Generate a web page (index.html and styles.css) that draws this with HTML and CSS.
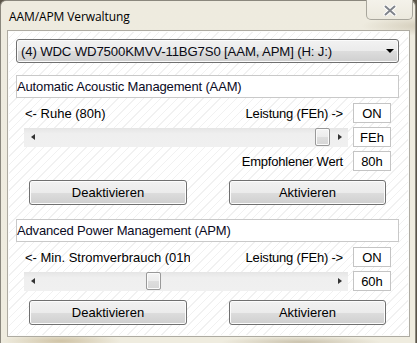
FILE: index.html
```html
<!DOCTYPE html>
<html>
<head>
<meta charset="utf-8">
<link rel="stylesheet" href="styles.css">
</head>
<body>
<div class="window">
  <div class="titlebar">
    <span class="title">AAM/APM Verwaltung</span>
    <div class="close">
      <svg width="14" height="11" viewBox="0 0 14 11"><path d="M2.5 1.5 L11.5 9.5 M11.5 1.5 L2.5 9.5" stroke="#fff" stroke-width="4" stroke-linecap="round"/><path d="M2.5 1.5 L11.5 9.5 M11.5 1.5 L2.5 9.5" stroke="#80848b" stroke-width="2" stroke-linecap="round"/></svg>
    </div>
  </div>
  <div class="client">
    <div class="combo">
      <span class="combo-text">(4) WDC WD7500KMVV-11BG7S0 [AAM, APM] (H: J:)</span>
      <span class="combo-arrow"></span>
    </div>

    <section class="group">
      <div class="header">Automatic Acoustic Management (AAM)</div>
      <div class="row">
        <span class="lbl-left">&lt;- Ruhe (80h)</span>
        <span class="lbl-right">Leistung (FEh) -&gt;</span>
        <span class="val">ON</span>
      </div>
      <div class="row">
        <div class="scroll">
          <span class="arr arr-l"></span>
          <div class="track"><span class="thumb" style="margin-left:274px"></span></div>
          <span class="arr arr-r"></span>
        </div>
        <span class="val">FEh</span>
      </div>
      <div class="row">
        <span class="lbl-right">Empfohlener Wert</span>
        <span class="val">80h</span>
      </div>
      <div class="buttons">
        <button class="btn">Deaktivieren</button>
        <button class="btn">Aktivieren</button>
      </div>
    </section>

    <section class="group group2">
      <div class="header">Advanced Power Management (APM)</div>
      <div class="row">
        <span class="lbl-left">&lt;- Min. Stromverbrauch (01h)</span>
        <span class="lbl-right">Leistung (FEh) -&gt;</span>
        <span class="val">ON</span>
      </div>
      <div class="row">
        <div class="scroll">
          <span class="arr arr-l"></span>
          <div class="track"><span class="thumb" style="margin-left:105px"></span></div>
          <span class="arr arr-r"></span>
        </div>
        <span class="val">60h</span>
      </div>
      <div class="buttons">
        <button class="btn">Deaktivieren</button>
        <button class="btn">Aktivieren</button>
      </div>
    </section>
  </div>
</div>
</body>
</html>
```
FILE: styles.css
```css
* { box-sizing: border-box; }
html, body {
  margin: 0;
  padding: 0;
  width: 417px;
  height: 343px;
  overflow: hidden;
  background: #5a5448;
  font-family: "Liberation Sans", Arial, sans-serif;
  color: #000;
}
.window {
  width: 416px;
  height: 343px;
  border: 1px solid #8a877d;
  border-bottom: none;
  border-radius: 6px 6px 0 0;
  background:
    radial-gradient(ellipse 60px 8px at 60px 340px, rgba(150,120,60,0.35), transparent),
    radial-gradient(ellipse 80px 6px at 300px 341px, rgba(120,100,60,0.3), transparent),
    radial-gradient(ellipse 70px 10px at 430px 25px, rgba(120,100,60,0.25), transparent),
    linear-gradient(180deg, #eeebdf 0%, #efecdf 100%);
  display: flex;
  flex-direction: column;
  padding: 0 5px 6px 6px;
}
.titlebar {
  height: 29px;
  display: flex;
  align-items: flex-start;
  justify-content: space-between;
  flex: none;
}
.title {
  font-family: "Open Sans", "Liberation Sans", sans-serif;
  font-size: 12px;
  margin: 7px 0 0 2px;
  letter-spacing: -0.1px;
}
.close {
  width: 47px;
  height: 20px;
  margin-top: -1px;
  margin-right: -3px;
  border: 1px solid #a8a69c;
  border-top: none;
  border-radius: 0 0 5px 5px;
  background: linear-gradient(180deg, #f4f2ea, #ece9de);
  display: flex;
  align-items: center;
  justify-content: center;
  padding-top: 1px;
}
.client {
  flex: 1;
  border: 1px solid #aeaba2;
  background-color: #fff;
  background-image: repeating-linear-gradient(135deg, #ffffff 0 5px, #f1f1f1 5px 6px);
  padding: 8px 10px 0 8px;
  box-shadow: inset 0 0 0 1px #fdfdfb;
}
.combo {
  height: 24px;
  border: 1px solid #707070;
  border-radius: 3px;
  background: linear-gradient(180deg, #f2f2f2 0%, #ebebeb 50%, #dddddd 50%, #cfcfcf 100%);
  display: flex;
  align-items: center;
  padding: 0 0 0 4px;
  box-shadow: inset 0 0 0 1px #fbfbfb;
}
.combo-text {
  flex: 1;
  font-size: 13.2px;
  letter-spacing: -0.15px;
  color: #0a0a14;
}
.combo-arrow {
  width: 0;
  height: 0;
  border-left: 4px solid transparent;
  border-right: 4px solid transparent;
  border-top: 4px solid #000;
  margin-right: 4px;
}
.group { margin-top: 12px; font-size: 13px; }
.group2 { margin-top: 14px; }
.header {
  height: 23px;
  border: 1px solid #c9c9c9;
  background: #fff;
  display: flex;
  align-items: center;
  padding-left: 0;
  color: #0a0a1e;
  letter-spacing: -0.15px;
}
.row {
  height: 20px;
  display: flex;
  align-items: center;
  padding: 0 8px;
  margin-top: 4px;
  gap: 5px;
}
.header + .row { margin-top: 5px; }
.lbl-left {
  width: 166px;
  overflow: hidden;
  white-space: nowrap;
  padding-left: 1px;
}
.lbl-right {
  flex: 1;
  text-align: right;
  padding-right: 5px;
  white-space: nowrap;
  letter-spacing: -0.2px;
}
.val {
  width: 38px;
  height: 20px;
  border: 1px solid #c4c4c4;
  background: #fff;
  display: flex;
  align-items: center;
  justify-content: center;
  flex: none;
}
.scroll {
  flex: 1;
  height: 19px;
  background: linear-gradient(180deg, #e5e5e5, #efefef 30%, #f0f0f0);
  display: flex;
  align-items: center;
}
.arr {
  width: 17px;
  height: 19px;
  display: flex;
  align-items: center;
  justify-content: center;
  flex: none;
}
.arr::before {
  content: "";
  width: 0;
  height: 0;
  border-top: 3.5px solid transparent;
  border-bottom: 3.5px solid transparent;
}
.arr-l::before { border-right: 4px solid #333; }
.arr-r::before { border-left: 4px solid #333; }
.track {
  flex: 1;
  height: 19px;
  display: flex;
  align-items: center;
}
.thumb {
  width: 15px;
  height: 18px;
  border: 1px solid #999;
  border-radius: 2px;
  background: linear-gradient(180deg, #f4f4f4 0%, #ececec 50%, #dedede 50%, #d6d6d6 100%);
  box-shadow: inset 0 0 0 1px #fbfbfb;
}
.buttons {
  display: grid;
  grid-template-columns: 158px 157px;
  gap: 42px;
  padding: 0 13px;
  margin-top: 9px;
}
.btn {
  height: 25px;
  border: 1px solid #707070;
  border-radius: 3px;
  background: linear-gradient(180deg, #f2f2f2 0%, #ebebeb 50%, #dddddd 50%, #cfcfcf 100%);
  box-shadow: inset 0 0 0 1px #fcfcfc;
  font-family: "Liberation Sans", Arial, sans-serif;
  font-size: 13px;
  color: #000;
  padding: 0;
}
```
